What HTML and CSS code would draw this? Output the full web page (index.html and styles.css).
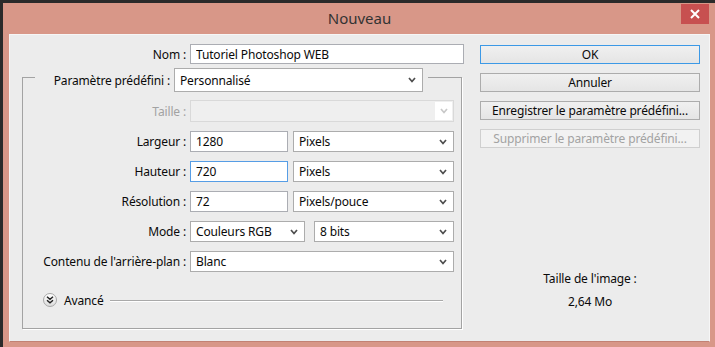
FILE: index.html
```html
<!DOCTYPE html>
<html lang="fr">
<head>
    <meta charset="UTF-8">
    <title>Nouveau</title>
    <link rel="stylesheet" href="styles.css">
</head>
<body>
    <div class="window">
        <div class="titlebar">
            <span></span>
            <span class="title">Nouveau</span>
            <button class="close" type="button">
                <svg width="10" height="10" viewBox="0 0 10 10"><path d="M1 1 L9 9 M9 1 L1 9" stroke="#fff" stroke-width="2" fill="none"/></svg>
            </button>
        </div>

        <div class="client">
            <div class="form">
                <div class="row name-row">
                    <label>Nom :</label>
                    <input class="field" type="text" value="Tutoriel Photoshop WEB">
                </div>

                <div class="group">
                    <div class="legend">
                        <label>Paramètre prédéfini :</label>
                        <div class="select tall"><span>Personnalisé</span><svg class="chev" width="8" height="6" viewBox="0 0 8 6"><path d="M1 1 L4 4.5 L7 1" stroke="#4d4d4d" stroke-width="1.7" fill="none"/></svg></div>
                    </div>

                    <div class="row first">
                        <label class="disabled">Taille :</label>
                        <div class="select off w-full"><span></span><i class="chev-box"><svg width="8" height="6" viewBox="0 0 8 6"><path d="M1 1 L4 4.5 L7 1" stroke="#c8c8c8" stroke-width="1.7" fill="none"/></svg></i></div>
                    </div>

                    <div class="row">
                        <label>Largeur :</label>
                        <div class="pair">
                            <input class="field num" type="text" value="1280">
                            <div class="select unit"><span>Pixels</span><svg class="chev" width="8" height="6" viewBox="0 0 8 6"><path d="M1 1 L4 4.5 L7 1" stroke="#4d4d4d" stroke-width="1.7" fill="none"/></svg></div>
                        </div>
                    </div>

                    <div class="row">
                        <label>Hauteur :</label>
                        <div class="pair">
                            <input class="field num focus" type="text" value="720">
                            <div class="select unit"><span>Pixels</span><svg class="chev" width="8" height="6" viewBox="0 0 8 6"><path d="M1 1 L4 4.5 L7 1" stroke="#4d4d4d" stroke-width="1.7" fill="none"/></svg></div>
                        </div>
                    </div>

                    <div class="row">
                        <label>Résolution :</label>
                        <div class="pair">
                            <input class="field num" type="text" value="72">
                            <div class="select unit"><span>Pixels/pouce</span><svg class="chev" width="8" height="6" viewBox="0 0 8 6"><path d="M1 1 L4 4.5 L7 1" stroke="#4d4d4d" stroke-width="1.7" fill="none"/></svg></div>
                        </div>
                    </div>

                    <div class="row">
                        <label>Mode :</label>
                        <div class="pair mode">
                            <div class="select"><span>Couleurs RGB</span><svg class="chev" width="8" height="6" viewBox="0 0 8 6"><path d="M1 1 L4 4.5 L7 1" stroke="#4d4d4d" stroke-width="1.7" fill="none"/></svg></div>
                            <div class="select"><span>8 bits</span><svg class="chev" width="8" height="6" viewBox="0 0 8 6"><path d="M1 1 L4 4.5 L7 1" stroke="#4d4d4d" stroke-width="1.7" fill="none"/></svg></div>
                        </div>
                    </div>

                    <div class="row">
                        <label>Contenu de l'arrière-plan :</label>
                        <div class="select w-full"><span>Blanc</span><svg class="chev" width="8" height="6" viewBox="0 0 8 6"><path d="M1 1 L4 4.5 L7 1" stroke="#4d4d4d" stroke-width="1.7" fill="none"/></svg></div>
                    </div>

                    <div class="advanced">
                        <span class="toggle">
                            <svg width="8" height="8" viewBox="0 0 8 8"><path d="M1 0.8 L4 3.3 L7 0.8 M1 4.3 L4 6.8 L7 4.3" stroke="#222" stroke-width="1.4" fill="none"/></svg>
                        </span>
                        <span>Avancé</span>
                        <span class="rule"></span>
                    </div>
                </div>
            </div>

            <div class="side">
                <button class="btn default" type="button">OK</button>
                <button class="btn" type="button">Annuler</button>
                <button class="btn" type="button">Enregistrer le paramètre prédéfini...</button>
                <button class="btn" type="button" disabled>Supprimer le paramètre prédéfini...</button>

                <div class="image-size">
                    <p>Taille de l'image :</p>
                    <p>2,64 Mo</p>
                </div>
            </div>
        </div>
    </div>
</body>
</html>
```

FILE: styles.css
```css
body {
    margin: 0;
    width: 715px;
    height: 347px;
    overflow: hidden;
    background-color: #d89788;
    font-family: "Noto Sans", Arial, sans-serif;
    font-size: 12px;
    letter-spacing: -0.15px;
    color: #0a0a0a;
}

/* Window frame */
.window {
    box-sizing: border-box;
    height: 347px;
    display: flex;
    flex-direction: column;
    border-top: 3px solid #2a2a2a;
    border-left: 3px solid #2a2a2a;
    padding: 0 5px 5px 6px;
}

.titlebar {
    height: 31px;
    display: grid;
    grid-template-columns: 1fr auto 1fr;
}

.title {
    font-size: 15px;
    letter-spacing: 0;
    color: #333;
    line-height: 31px;
}

.close {
    justify-self: end;
    width: 28px;
    height: 20px;
    margin: 1px 1px 0 0;
    padding: 0;
    border: none;
    background-color: #c75050;
    display: flex;
    align-items: center;
    justify-content: center;
}

.client {
    flex: 1;
    display: flex;
    background-color: #ececec;
    border: 1px solid #f6f6f6;
    border-bottom-color: #c28274;
}

/* Left form */
.form {
    width: 470px;
}

.row {
    display: grid;
    grid-template-columns: 163px auto;
    column-gap: 4px;
    align-items: center;
    height: 21px;
    margin-top: 9px;
}

.row label {
    text-align: right;
    white-space: nowrap;
}

.row.first {
    margin-top: 8px;
    height: 22px;
}

.name-row {
    grid-template-columns: 176px auto;
    height: 20px;
}

.disabled {
    color: #a2a2a2;
}

.field {
    box-sizing: border-box;
    height: 20px;
    width: 274px;
    margin: 0;
    padding: 0 5px;
    border: 1px solid #abadb3;
    background: #fff;
    font-family: inherit;
    font-size: 12px;
    letter-spacing: inherit;
    color: #0a0a0a;
    outline: none;
}

.field.num {
    width: 98px;
    height: 21px;
}

.field.focus {
    border-color: #569de5;
}

.select {
    box-sizing: border-box;
    height: 21px;
    display: flex;
    align-items: center;
    justify-content: space-between;
    padding: 0 6px 0 5px;
    border: 1px solid #acacac;
    background: #fff;
    white-space: nowrap;
}

.select.tall {
    height: 24px;
    width: 249px;
}

.select.w-full {
    width: 264px;
}

.select.off {
    height: 22px;
    padding-right: 1px;
    border-color: #d9d9d9;
    background: #efefef;
}

.chev-box {
    width: 17px;
    height: 18px;
    background: #fff;
    display: flex;
    align-items: center;
    justify-content: center;
}

.pair {
    display: flex;
    gap: 5px;
}

.select.unit {
    width: 161px;
}

.pair.mode {
    gap: 9px;
}

.pair.mode .select:first-child {
    width: 115px;
}

.pair.mode .select:last-child {
    width: 140px;
}

/* Preset group box */
.group {
    box-sizing: border-box;
    width: 440px;
    height: 252px;
    margin: 13px 0 0 12px;
    border: 1px solid #a3a3a3;
    box-shadow: 1px 1px 0 #fff;
}

.legend {
    display: grid;
    grid-template-columns: 135px auto;
    column-gap: 4px;
    align-items: center;
    width: 388px;
    margin: -10px 0 0 12px;
    padding-right: 5px;
    background-color: #ececec;
}

.legend label {
    text-align: right;
    white-space: nowrap;
}

.advanced {
    display: flex;
    align-items: center;
    height: 16px;
    margin: 20px 18px 0 20px;
}

.toggle {
    box-sizing: border-box;
    width: 14px;
    height: 14px;
    margin-right: 7px;
    border: 1px solid #a8a8a8;
    border-radius: 50%;
    background: linear-gradient(#ffffff, #dcdcdc);
    display: flex;
    align-items: center;
    justify-content: center;
}

.rule {
    flex: 1;
    height: 1px;
    margin-left: 6px;
    background-color: #a9a9a9;
    box-shadow: 0 1px 0 #fff;
}

/* Right buttons */
.side {
    width: 220px;
    padding-top: 10px;
    display: flex;
    flex-direction: column;
}

.btn {
    height: 19px;
    margin: 0 0 9px 0;
    padding: 0;
    border: 1px solid #acacac;
    background: linear-gradient(#f0f0f0, #e5e5e5);
    font-family: inherit;
    font-size: 12px;
    letter-spacing: inherit;
    color: #0a0a0a;
    line-height: 16px;
}

.btn.default {
    border-color: #3c99e6;
}

.btn:disabled {
    border-color: #cfcfcf;
    background: #f2f2f2;
    color: #a3a3a3;
}

.image-size {
    margin-top: 114px;
    text-align: center;
}

.image-size p {
    margin: 0 0 7px 0;
    line-height: 16px;
}
```
